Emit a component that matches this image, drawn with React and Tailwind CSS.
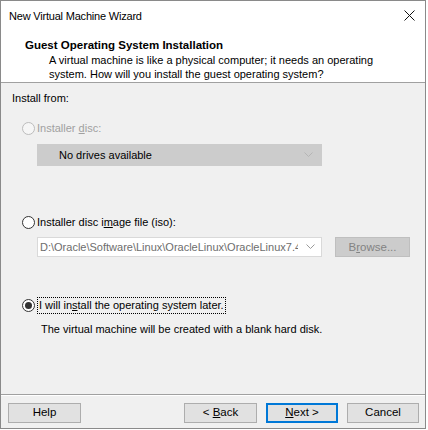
import React from "react";

const font = { fontFamily: '"Liberation Sans", Arial, sans-serif' };

const Radio = ({ checked, disabled }) => (
  <span
    className={`w-[13px] h-[13px] rounded-full border flex items-center justify-center shrink-0 ${
      disabled ? "border-[#bcbcbc] bg-[#f6f6f6]" : "border-[#333333] bg-white"
    }`}
  >
    {checked && <span className="w-[7px] h-[7px] rounded-full bg-[#333333]" />}
  </span>
);

const Chevron = ({ color }) => (
  <svg width="9" height="6" viewBox="0 0 9 6" className="shrink-0">
    <path d="M0.5 0.5 L4.5 4.5 L8.5 0.5" fill="none" stroke={color} strokeWidth="1" />
  </svg>
);

const Button = ({ children, isDefault, disabled, className = "" }) => (
  <div
    className={`h-[20px] flex items-center justify-center text-[11.5px] ${
      isDefault
        ? "border-2 border-[#0078d7] bg-[#e1e1e1] text-black"
        : disabled
        ? "border border-[#bfbfbf] bg-[#cccccc] text-[#838383]"
        : "border border-[#adadad] bg-[#e1e1e1] text-black"
    } ${className}`}
  >
    {children}
  </div>
);

export default function App() {
  return (
    <div className="w-[428px] h-[430px] bg-white text-black" style={font}>
      <div className="w-[426px] h-[429px] border border-[#8a8a8a] flex flex-col">
        {/* title bar */}
        <div className="h-[29px] bg-white flex items-center justify-between pl-[8px] pr-[8px] shrink-0">
          <span className="text-[11px] leading-[16px] pt-[1px] tracking-[-0.2px]">New Virtual Machine Wizard</span>
          <svg width="11" height="11" viewBox="0 0 11 11" className="mr-[2px]">
            <path d="M0.5 0.5 L10.5 10.5 M10.5 0.5 L0.5 10.5" stroke="#111" strokeWidth="1" />
          </svg>
        </div>

        {/* header */}
        <div className="h-[52px] bg-white shrink-0 pl-[24px] pt-[7px]">
          <div className="text-[11.5px] leading-[16px] font-bold">Guest Operating System Installation</div>
          <div className="pl-[24px] text-[11px] leading-[14px]">
            <div>A virtual machine is like a physical computer; it needs an operating</div>
            <div>system. How will you install the guest operating system?</div>
          </div>
        </div>
        <div className="h-px bg-[#a0a0a0] shrink-0" />

        {/* body */}
        <div className="flex-1 bg-[#f0f0f0] pl-[11px] pr-[15px] text-[11px] leading-[16px]">
          <div className="mt-[7px]">Install from:</div>

          <div className="mt-[14px] flex items-center gap-[2px] pl-[10px] text-[#a0a0a0]">
            <Radio disabled />
            <span>
              Installer <u>d</u>isc:
            </span>
          </div>
          <div className="mt-[8px] ml-[25px] w-[285px] h-[22px] bg-[#cccccc] border border-[#cccccc] flex items-center justify-between pl-[21px] pr-[8px]">
            <span className="text-black">No drives available</span>
            <Chevron color="#b5b5b5" />
          </div>

          <div className="mt-[48px] flex items-center gap-[2px] pl-[10px]">
            <Radio />
            <span>
              Installer disc i<u>m</u>age file (iso):
            </span>
          </div>
          <div className="mt-[7px] flex items-center gap-[13px] ml-[25px]">
            <div className="w-[285px] h-[20px] bg-white border border-[#d9d9d9] flex items-center pl-[2px] pr-[6px]">
              <span className="flex-1 min-w-0 overflow-hidden whitespace-nowrap text-[#6d6d6d]">
                D:\Oracle\Software\Linux\OracleLinux\OracleLinux7.4\V
              </span>
              <span className="pl-[8px]">
                <Chevron color="#9a9a9a" />
              </span>
            </div>
            <Button disabled className="w-[75px]">
              <span>
                B<u>r</u>owse...
              </span>
            </Button>
          </div>

          <div className="mt-[40px] flex items-center gap-[2px] pl-[10px]">
            <Radio checked />
            <span className="border border-dotted border-black px-px leading-[15px]">
              I will in<u>s</u>tall the operating system later.
            </span>
          </div>
          <div className="mt-[7px] pl-[29px]">The virtual machine will be created with a blank hard disk.</div>
        </div>

        {/* footer */}
        <div className="h-px bg-[#a0a0a0] shrink-0" />
        <div className="h-px bg-white shrink-0" />
        <div className="h-[32px] bg-[#f0f0f0] shrink-0 flex items-start pt-[7px] pl-[7px] pr-[6px]">
          <Button className="w-[73px]">Help</Button>
          <div className="flex-1" />
          <Button className="w-[73px]">
            <span>
              &lt; <u>B</u>ack
            </span>
          </Button>
          <Button isDefault className="w-[72px] ml-[9px]">
            <span>
              <u>N</u>ext &gt;
            </span>
          </Button>
          <Button className="w-[72px] ml-[9px]">Cancel</Button>
        </div>
      </div>
    </div>
  );
}
